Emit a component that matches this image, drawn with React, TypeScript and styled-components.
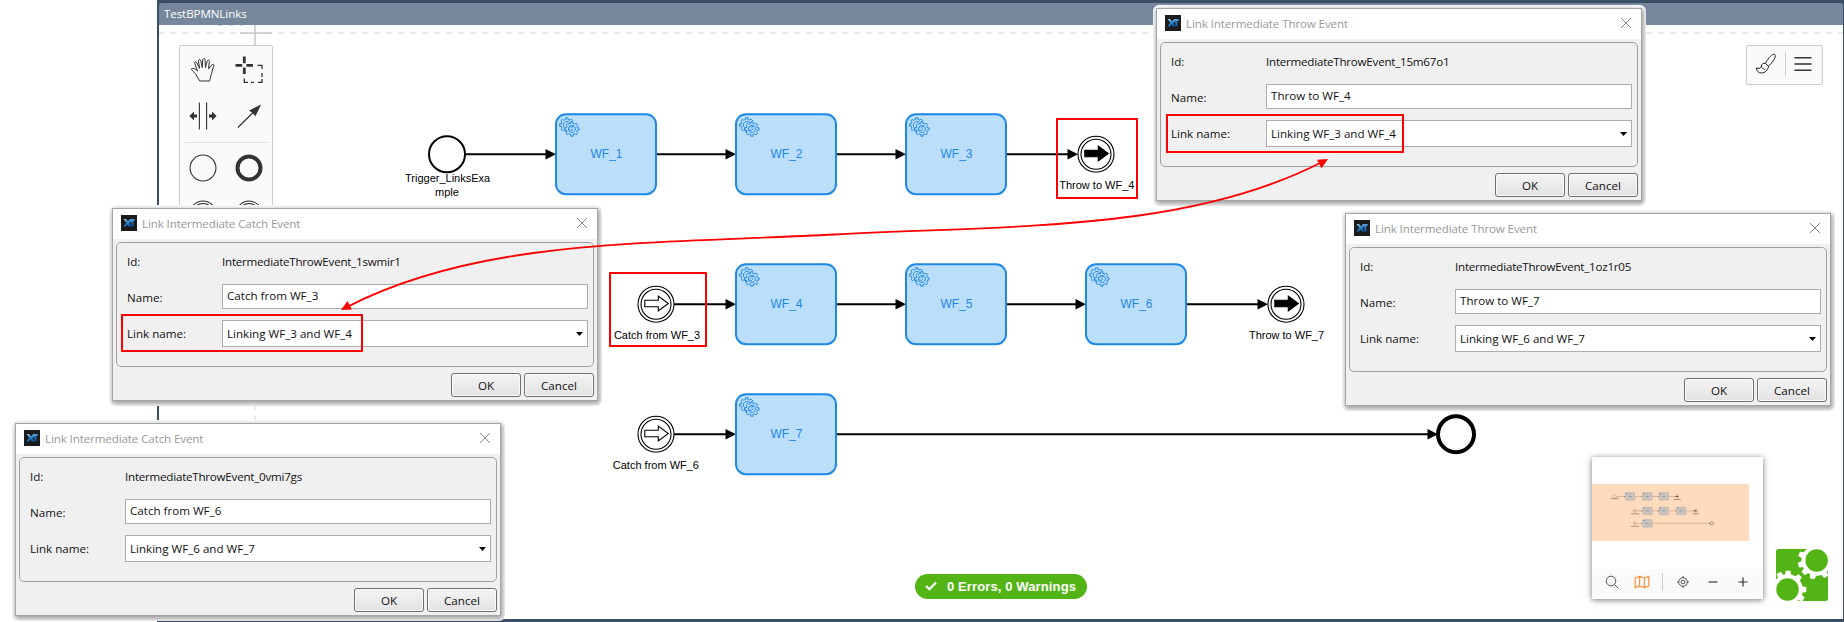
import React from "react";
import styled, { createGlobalStyle } from "styled-components";

const UI_FONT = `"Open Sans", "Noto Sans", sans-serif`;
const DIAGRAM_FONT = `"Liberation Sans", Arial, sans-serif`;

const GlobalStyle = createGlobalStyle`
  * { box-sizing: border-box; }
  body { margin: 0; background: #fff; font-family: ${UI_FONT}; }
`;

/* ---------- page and editor window ---------- */

const Desktop = styled.main`
  position: relative;
  width: 1844px;
  height: 622px;
  padding-left: 157px;
  overflow: hidden;
`;

const EditorWindow = styled.section`
  display: flex;
  flex-direction: column;
  height: 622px;
  background: #3a4e66;
  padding: 3px 1px 3px 2px;
`;

const EditorTitle = styled.header`
  flex: 0 0 21px;
  padding-left: 5px;
  border-radius: 3px 3px 0 0;
  background: #76869b;
  color: #fff;
  font-size: 11.6px;
  letter-spacing: -0.1px;
  line-height: 22px;
`;

const Canvas = styled.div`
  position: relative;
  flex: 1;
  background: #fff;
  overflow: hidden;
`;

const DiagramSvg = styled.svg`
  display: block;
  font-family: ${DIAGRAM_FONT};
`;

/* ---------- floating editor tools ---------- */

const Palette = styled.aside`
  position: absolute;
  left: 20px;
  top: 20px;
  width: 94px;
  height: 300px;
  padding-top: 1px;
  background: #fafafa;
  border: 1px solid #ccc;
  border-radius: 2px;
`;

const PaletteGroup = styled.div<{ $offset?: number }>`
  display: grid;
  grid-template-columns: 46px 46px;
  grid-auto-rows: 46px;
  place-items: center;
  padding-top: ${(p) => p.$offset ?? 0}px;
`;

const PaletteRule = styled.hr`
  width: 82px;
  margin: 3px auto 0;
  border: 0;
  border-top: 1px solid #ddd;
`;

const CanvasTools = styled.div`
  position: absolute;
  right: 20px;
  top: 20px;
  display: flex;
  align-items: center;
  justify-content: space-between;
  width: 77px;
  height: 40px;
  padding: 0 10px 2px 8px;
  background: #fafafa;
  border: 1px solid #ccc;
  border-radius: 2px;
`;

const ToolRule = styled.span<{ $height: number }>`
  width: 1px;
  height: ${(p) => p.$height}px;
  background: #ccc;
`;

const MiniMap = styled.div`
  position: absolute;
  right: 80px;
  bottom: 20px;
  display: flex;
  flex-direction: column;
  width: 171px;
  height: 142px;
  background: #fff;
  box-shadow: 0 1px 6px rgba(0, 0, 0, 0.55);
`;

const MiniMapBar = styled.div`
  display: grid;
  grid-template-columns: 30px 30px 11px 30px 30px 30px;
  place-items: center;
  height: 30px;
  padding: 0 5px 4px;
  background: #fafafa;
`;

const LogoMark = styled.svg`
  position: absolute;
  right: 15px;
  bottom: 18px;
`;

const StatusPill = styled.div`
  position: absolute;
  left: 756px;
  bottom: 20px;
  display: flex;
  align-items: center;
  gap: 10px;
  width: 172px;
  height: 25px;
  padding: 0 0 1px 10px;
  border-radius: 13px;
  background: #52b415;
  color: #fff;
  font: bold 13px ${DIAGRAM_FONT};
  letter-spacing: 0.12px;
  white-space: nowrap;
`;

/* ---------- dialogs ---------- */

const DialogHalo = styled.div<{ $x: number; $y: number }>`
  position: absolute;
  left: ${(p) => p.$x - 3}px;
  top: ${(p) => p.$y - 3}px;
  padding: 3px 4px 5px 3px;
  border-radius: 6px;
  background: #fff;
  overflow: hidden;
`;

const DialogBox = styled.section`
  width: 486px;
  height: 193px;
  border: 1px solid #a5a5a5;
  background: #f0f0f0;
  box-shadow: 1px 2px 5px 1px rgba(0, 0, 0, 0.38);
  color: #111;
  font-size: 11.6px;
`;

const DialogTitle = styled.header`
  display: flex;
  align-items: center;
  height: 30px;
  padding: 0 10px 2px 8px;
  background: #fff;
  color: #999;
`;

const TitleText = styled.span`
  flex: 1;
  padding: 1px 0 0 5px;
  letter-spacing: -0.12px;
`;

const FormGroup = styled.div`
  display: grid;
  grid-template-columns: 95px 366px;
  grid-template-rows: 38px 28px 38px;
  align-items: end;
  width: 478px;
  height: 125px;
  margin: 3px 0 6px 3px;
  padding-left: 10px;
  border: 1px solid #a0a0a0;
  border-radius: 5px;
`;

const Label = styled.span<{ $drop?: number }>`
  align-self: center;
  padding-top: ${(p) => p.$drop ?? 0}px;
  line-height: 16px;
`;

const IdValue = styled(Label)`
  letter-spacing: -0.23px;
`;

const Field = styled.div<{ $tall?: boolean }>`
  display: flex;
  align-items: center;
  justify-content: space-between;
  height: ${(p) => (p.$tall ? 27 : 25)}px;
  padding: 0 4px ${(p) => (p.$tall ? 0 : 2)}px 4px;
  border: 1px solid #abadb3;
  background: #fff;
`;

const ButtonRow = styled.footer`
  display: flex;
  justify-content: flex-end;
  gap: 3px;
  padding-right: 3px;
`;

const DialogButton = styled.button`
  width: 70px;
  height: 24px;
  padding: 0;
  border: 1px solid #707070;
  border-radius: 3px;
  background: linear-gradient(#f4f4f4, #e2e2e2);
  box-shadow: inset 0 0 0 1px #fafafa;
  color: #111;
  font: 11.6px ${UI_FONT};
`;

/* ---------- annotations ---------- */

const Highlight = styled.div<{ $x: number; $y: number; $w: number; $h: number }>`
  position: absolute;
  left: ${(p) => p.$x}px;
  top: ${(p) => p.$y}px;
  width: ${(p) => p.$w}px;
  height: ${(p) => p.$h}px;
  border: 2px solid #f00;
`;

const Annotation = styled.svg`
  position: absolute;
  left: 0;
  top: 0;
  pointer-events: none;
`;

/* ---------- diagram parts ---------- */

const GEAR =
  "v -1.71335 c 0.352326,-0.0705 0.703932,-0.17838 1.047628,-0.32133 0.344416,-0.14465 0.665822,-0.32133 0.966377,-0.52145 l 1.19431,1.18005 1.567487,-1.57688 -1.195028,-1.18014 c 0.403376,-0.61394 0.683079,-1.29908 0.825447,-2.01824 l 1.622133,-0.01 v -2.2196 l -1.636514,0.01 c -0.07333,-0.35153 -0.178319,-0.70024 -0.323564,-1.04372 -0.145244,-0.34406 -0.321407,-0.6644 -0.522735,-0.96217 l 1.131035,-1.13631 -1.583305,-1.56293 -1.129598,1.13589 c -0.614052,-0.40108 -1.302883,-0.68093 -2.022633,-0.82247 l 0.0093,-1.61852 h -2.241173 l 0.0042,1.63124 c -0.353763,0.0736 -0.705369,0.17977 -1.049785,0.32371 -0.344415,0.14437 -0.665102,0.32092 -0.9635006,0.52006 l -1.1698628,-1.15823 -1.5667691,1.5792 1.1684265,1.15669 c -0.4026573,0.61283 -0.68308,1.29797 -0.8247287,2.01713 l -1.6588041,0.003 v 2.22174 l 1.6724648,-0.006 c 0.073327,0.35077 0.1797598,0.70243 0.3242851,1.04472 0.1452428,0.34448 0.3214064,0.6644 0.5227339,0.96066 l -1.1993431,1.19723 1.5840256,1.56011 1.1964668,-1.19348 c 0.6140517,0.40346 1.3028827,0.68232 2.0233517,0.82331 l 7.19e-4,1.69892 h 2.226848 z m 0.221462,-3.9957 c -1.788948,0.7502 -3.8576,-0.0928 -4.6097055,-1.87438 -0.7521065,-1.78321 0.090598,-3.84627 1.8802645,-4.59604 1.78823,-0.74936 3.856881,0.0929 4.608987,1.87437 0.752106,1.78165 -0.0906,3.84612 -1.879546,4.59605 z";

const ROWS = [153.2, 303.2, 433.2];

const TASKS = [
  { name: "WF_1", x: 556, row: 0 },
  { name: "WF_2", x: 736, row: 0 },
  { name: "WF_3", x: 906, row: 0 },
  { name: "WF_4", x: 736, row: 1 },
  { name: "WF_5", x: 906, row: 1 },
  { name: "WF_6", x: 1086, row: 1 },
  { name: "WF_7", x: 736, row: 2 },
];

const LINK_EVENTS = [
  { name: "Throw to WF_4", x: 1096, labelX: 1096.8, row: 0, filled: true },
  { name: "Catch from WF_3", x: 656, labelX: 657, row: 1, filled: false },
  { name: "Throw to WF_7", x: 1286, labelX: 1286.5, row: 1, filled: true },
  { name: "Catch from WF_6", x: 656, labelX: 655.9, row: 2, filled: false },
];

const FLOWS = [
  [465, 556, 0],
  [656, 736, 0],
  [836, 906, 0],
  [1006, 1078, 0],
  [674, 736, 1],
  [836, 906, 1],
  [1006, 1086, 1],
  [1186, 1268, 1],
  [674, 736, 2],
  [836, 1438, 2],
];

const Flow = ({ from, to, y }: { from: number; to: number; y: number }) => (
  <g>
    <path d={`M${from} ${y}H${to - 6}`} stroke="#000" strokeWidth="2" />
    <path d={`M${to - 10.5} ${y - 5.3}L${to} ${y}L${to - 10.5} ${y + 5.3}Z`} />
  </g>
);

const Task = ({ x, y, name }: { x: number; y: number; name?: string }) => (
  <g>
    <rect x={x} y={y - 40} width="100" height="80" rx="10" fill="#bbdefb" stroke="#1e88e5" strokeWidth="2" />
    <g fill="#bbdefb" stroke="#1e88e5" strokeWidth="1">
      <path d={`M${x + 12} ${y - 22}${GEAR}`} />
      <path d={`M${x + 17} ${y - 18}${GEAR}`} />
    </g>
    {name && (
      <text x={x + 50.5} y={Math.floor(y) + 4} fontSize="12" fill="#1e88e5" textAnchor="middle">
        {name}
      </text>
    )}
  </g>
);

const LinkEvent = ({ x, y, filled }: { x: number; y: number; filled: boolean }) => (
  <g fill="#fff" stroke="#000" strokeWidth="1.1">
    <circle cx={x} cy={y} r="18" />
    <circle cx={x} cy={y} r="15" />
    <path
      d={`M${x - 11.2} ${y - 4}H${x + 2.3}V${y - 8.2}L${x + 12.3} ${y - 0.7}L${x + 2.3} ${y + 6.8}V${y + 2.6}H${x - 11.2}Z`}
      fill={filled ? "#000" : "#fff"}
    />
  </g>
);

const Process = ({ labels }: { labels?: boolean }) => (
  <g>
    {FLOWS.map(([from, to, row]) => (
      <Flow key={`${from}-${row}`} from={from} to={to} y={ROWS[row]} />
    ))}
    <circle cx="447" cy={ROWS[0]} r="18" fill="#fff" stroke="#000" strokeWidth="2" />
    <circle cx="1456" cy={ROWS[2]} r="18" fill="#fff" stroke="#000" strokeWidth="4" />
    {TASKS.map((t) => (
      <Task key={t.name} x={t.x} y={ROWS[t.row]} name={labels ? t.name : undefined} />
    ))}
    {LINK_EVENTS.map((e) => (
      <LinkEvent key={e.name} x={e.x} y={ROWS[e.row]} filled={e.filled} />
    ))}
    {labels ? (
      <g fontSize="11" textAnchor="middle">
        <text x="447.6" y="181">Trigger_LinksExa</text>
        <text x="447" y="195">mple</text>
        {LINK_EVENTS.map((e) => (
          <text key={e.name} x={e.labelX} y={Math.floor(ROWS[e.row]) + 35}>
            {e.name}
          </text>
        ))}
      </g>
    ) : (
      <g stroke="#555" strokeWidth="6">
        <path d="M405 177H490M1060 184H1134M614 334H700M1250 334H1323M614 464H700" />
        {TASKS.map((t) => (
          <path key={t.name} d={`M${t.x + 34} ${ROWS[t.row]}h32`} stroke="#1e88e5" />
        ))}
      </g>
    )}
  </g>
);

/* ---------- icons ---------- */

const HandIcon = () => (
  <svg width="28" height="28" viewBox="-2 -2 28 28" fill="none" stroke="#333" strokeWidth="1" strokeLinejoin="round">
    <path d="M8.8 23 L4.6 16 C2.8 13.6 0 12 .5 10.8 C1.5 9.8 4 10.4 6.5 13 L3.8 5.8 C3.3 3.7 5 3 5.8 4.8 L8.6 10.4 L7.4 2.9 C7.5 1 9.6 1 9.9 2.8 L11.2 9.6 L11.8 1.7 C12 0 14 0 14.1 1.5 L14.4 9.6 L16.3 2.8 C17 1.4 18.7 2 18.4 3.7 L17.4 11 L20.8 6.8 C22.2 5.6 23.5 6.7 22.8 8 C21 12 21 14.5 20 17.5 L18.5 23 Z" />
  </svg>
);

const LassoIcon = () => (
  <svg width="28" height="28" viewBox="0 0 28 28" fill="none" stroke="#333">
    <path d="M.5 9.3H7.2M11.4 9.3H18M9.3 .5V7.2M9.3 11.4V18" strokeWidth="2.8" />
    <path d="M22.5 9.3H27V13M27 17V21M27 23V26.3H23M19 26.3H16M13 26.3H9.3V22.5" strokeWidth="1.3" />
  </svg>
);

const SpaceIcon = () => (
  <svg width="28" height="28" viewBox="0 0 28 28" fill="#333">
    <path d="M10.4 .6V27.4M17.6 .6V27.4" stroke="#333" strokeWidth="1.1" />
    <path d="M.4 14L5 9.6V12.4H8V15.6H5V18.4ZM27.6 14L23 9.6V12.4H20V15.6H23V18.4Z" />
  </svg>
);

const ConnectIcon = () => (
  <svg width="28" height="28" viewBox="0 0 28 28" fill="#333">
    <path d="M3 25.5L17.5 11" stroke="#333" strokeWidth="1.3" />
    <path d="M26.2 2.6L20.4 14.2L17.5 11L14 8.5Z" />
  </svg>
);

const CircleIcon = ({ weight, double }: { weight: number; double?: boolean }) => (
  <svg width="28" height="28" viewBox="0 0 28 28" fill="none" stroke="#333">
    <circle cx="14" cy="14" r={13.5 - weight / 2} strokeWidth={weight} />
    {double && <circle cx="14" cy="14" r="10.5" strokeWidth={weight} />}
  </svg>
);

const BrushIcon = () => (
  <svg width="22" height="22" viewBox="0 0 22 22" fill="none" stroke="#222" strokeWidth="1" strokeLinejoin="round">
    <path d="M10.4 10.4C12.4 6.6 16 1.6 18.6 1.3C21.2 1.2 20.4 4.6 18.6 7.2C17 9.6 15.2 11.8 13.6 13Z" />
    <path d="M10.4 10.4C8.2 9.9 6.4 11 6.4 13.2C5.6 15.4 3.4 16 1.4 14.8C1.2 17.6 3.4 20 6.4 20C10 20 13.2 17 13.6 13" />
    <path d="M6.4 13.2C7 15.6 8.6 16.6 10.6 16.2" strokeWidth="0.8" />
  </svg>
);

const MenuIcon = () => (
  <svg width="18" height="16" viewBox="0 0 18 16" stroke="#333" strokeWidth="1.4">
    <path d="M.5 1.8H17.5M.5 8H17.5M.5 14.2H17.5" />
  </svg>
);

const SearchIcon = () => (
  <svg width="14" height="14" viewBox="0 0 14 14" fill="none" stroke="#555" strokeWidth="1">
    <circle cx="6" cy="6" r="4.8" />
    <path d="M9.5 9.5L13.3 13.3" />
  </svg>
);

const MapIcon = () => (
  <svg width="16" height="14" viewBox="0 0 16 14" fill="none" stroke="#ff8a2b" strokeWidth="1.1">
    <path d="M1.2 3L5.6 1.3L10.4 3L14.8 1.3V11L10.4 12.6L5.6 11L1.2 12.6ZM5.6 1.3V11M10.4 3V12.6" />
  </svg>
);

const TargetIcon = () => (
  <svg width="14" height="14" viewBox="0 0 14 14" fill="none" stroke="#555" strokeWidth="1">
    <circle cx="7" cy="7" r="4.3" />
    <circle cx="7" cy="7" r="1.9" />
    <path d="M7 1V2.7M7 11.3V13M1 7H2.7M11.3 7H13" />
  </svg>
);

const StepIcon = ({ plus }: { plus?: boolean }) => (
  <svg width="10" height="10" viewBox="0 0 10 10" stroke="#333" strokeWidth="1.2">
    <path d={plus ? "M.5 5H9.5M5 .5V9.5" : "M.5 5H9.5"} />
  </svg>
);

const AppIcon = () => (
  <svg width="16" height="16" viewBox="0 0 16 16">
    <defs>
      <linearGradient id="appBlue" x1="0" y1="0" x2="0.4" y2="1">
        <stop offset="0" stopColor="#a9cdea" />
        <stop offset="0.5" stopColor="#3187cc" />
        <stop offset="1" stopColor="#0a5cad" />
      </linearGradient>
    </defs>
    <rect width="16" height="16" fill="#1b1b1b" />
    <path
      fill="url(#appBlue)"
      d="M2.5 4H5L7 6.2L9.2 4H13.7V6H12.4V11.5H10.4V6.4L8.4 8L10.4 11.5H7.8L6.6 9.6L4.8 11.5H2.3L5.3 7.8Z"
    />
  </svg>
);

const CloseIcon = () => (
  <svg width="10" height="10" viewBox="0 0 10 10" stroke="#888" strokeWidth="1">
    <path d="M0 0L10 10M10 0L0 10" />
  </svg>
);

const CaretIcon = () => (
  <svg width="7" height="4" viewBox="0 0 7 4">
    <path d="M0 0H7L3.5 4Z" />
  </svg>
);

const CheckIcon = () => (
  <svg width="12" height="10" viewBox="0 0 12 10" fill="none" stroke="#fff" strokeWidth="2.2">
    <path d="M1 5L4.4 8.2L11 1.4" />
  </svg>
);

const Cog = ({ x, y, teeth }: { x: number; y: number; teeth: number[] }) => (
  <g transform={`translate(${x} ${y})`}>
    <circle r="15.2" fill="#fff" />
    {teeth.map((angle) => (
      <path key={angle} d="M13 -3.4L18.8 -2.4V2.4L13 3.4Z" fill="#fff" transform={`rotate(${angle})`} />
    ))}
    <circle r="11.2" fill="#52b415" />
  </g>
);

/* ---------- composed parts ---------- */

interface DialogProps {
  x: number;
  y: number;
  kind: "Throw" | "Catch";
  id: string;
  name: string;
  link: string;
}

const LinkDialog = ({ x, y, kind, id, name, link }: DialogProps) => (
  <DialogHalo $x={x} $y={y}>
    <DialogBox>
      <DialogTitle>
        <AppIcon />
        <TitleText>Link Intermediate {kind} Event</TitleText>
        <CloseIcon />
      </DialogTitle>
      <FormGroup>
        <Label>Id:</Label>
        <IdValue>{id}</IdValue>
        <Label $drop={5}>Name:</Label>
        <Field>{name}</Field>
        <Label $drop={11}>Link name:</Label>
        <Field $tall>
          {link}
          <CaretIcon />
        </Field>
      </FormGroup>
      <ButtonRow>
        <DialogButton>OK</DialogButton>
        <DialogButton>Cancel</DialogButton>
      </ButtonRow>
    </DialogBox>
  </DialogHalo>
);

export default function App() {
  return (
    <Desktop>
      <GlobalStyle />
      <EditorWindow>
        <EditorTitle>TestBPMNLinks</EditorTitle>
        <Canvas>
          <DiagramSvg width="1684" height="595" viewBox="159 24 1684 595">
            <path d="M158 32H1844" stroke="#e2e2e2" strokeWidth="1.6" strokeDasharray="6 6" />
            <path d="M255 24V46M240 32.2H272" stroke="#ccc" strokeWidth="1.7" />
            <path d="M218 24.4h4M229 24.4h4M240 24.4h3" stroke="#ccc" strokeWidth="1" />
            <path d="M255 343V619" stroke="#e2e2e2" strokeWidth="1.6" strokeDasharray="6 6" />
            <Process labels />
          </DiagramSvg>

          <Palette>
            <PaletteGroup>
              <HandIcon />
              <LassoIcon />
              <SpaceIcon />
              <ConnectIcon />
            </PaletteGroup>
            <PaletteRule />
            <PaletteGroup $offset={2}>
              <CircleIcon weight={1.1} />
              <CircleIcon weight={4} />
              <CircleIcon weight={1.1} double />
              <CircleIcon weight={1.1} double />
            </PaletteGroup>
          </Palette>

          <CanvasTools>
            <BrushIcon />
            <ToolRule $height={24} />
            <MenuIcon />
          </CanvasTools>

          <MiniMap>
            <svg width="171" height="112" viewBox="1592 457 171 112">
              <g transform="translate(1571.7 481.7) scale(0.0963)">
                <Process />
              </g>
              <rect x="1588" y="484" width="161" height="57" rx="1.5" fill="#ff7400" fillOpacity="0.26" />
            </svg>
            <MiniMapBar>
              <SearchIcon />
              <MapIcon />
              <ToolRule $height={18} />
              <TargetIcon />
              <StepIcon />
              <StepIcon plus />
            </MiniMapBar>
          </MiniMap>

          <LogoMark width="52" height="52" viewBox="0 0 52 52">
            <rect width="52" height="52" rx="2.5" fill="#52b415" />
            <rect x="40" width="12" height="12" fill="#fff" />
            <rect y="40" width="12" height="12" fill="#fff" />
            <Cog x={40.7} y={11.5} teeth={[60, 104, 136, 166, 201]} />
            <Cog x={11.5} y={40.5} teeth={[-118, -88, -48, 0, 32]} />
          </LogoMark>

          <StatusPill>
            <CheckIcon />
            0 Errors, 0 Warnings
          </StatusPill>
        </Canvas>
      </EditorWindow>

      <LinkDialog x={1156} y={8} kind="Throw" id="IntermediateThrowEvent_15m67o1" name="Throw to WF_4" link="Linking WF_3 and WF_4" />
      <LinkDialog x={1345} y={213} kind="Throw" id="IntermediateThrowEvent_1oz1r05" name="Throw to WF_7" link="Linking WF_6 and WF_7" />
      <LinkDialog x={112} y={208} kind="Catch" id="IntermediateThrowEvent_1swmir1" name="Catch from WF_3" link="Linking WF_3 and WF_4" />
      <LinkDialog x={15} y={423} kind="Catch" id="IntermediateThrowEvent_0vmi7gs" name="Catch from WF_6" link="Linking WF_6 and WF_7" />

      <Highlight $x={1056} $y={118} $w={82} $h={81} />
      <Highlight $x={1166} $y={114} $w={238} $h={39} />
      <Highlight $x={609} $y={272} $w={98} $h={75} />
      <Highlight $x={121} $y={314} $w={242} $h={38} />

      <Annotation width="1844" height="622" viewBox="0 0 1844 622">
        <path
          d="M346 307.5C480 238 650 244 834.5 234.5C1019 225 1189 231 1323 161.5"
          fill="none"
          stroke="#f00"
          strokeWidth="1.8"
        />
        <path d="M341 310L347.5 301L352 309.5ZM1328 159L1317 159.8L1321.5 168.2Z" fill="#f00" />
      </Annotation>
    </Desktop>
  );
}
